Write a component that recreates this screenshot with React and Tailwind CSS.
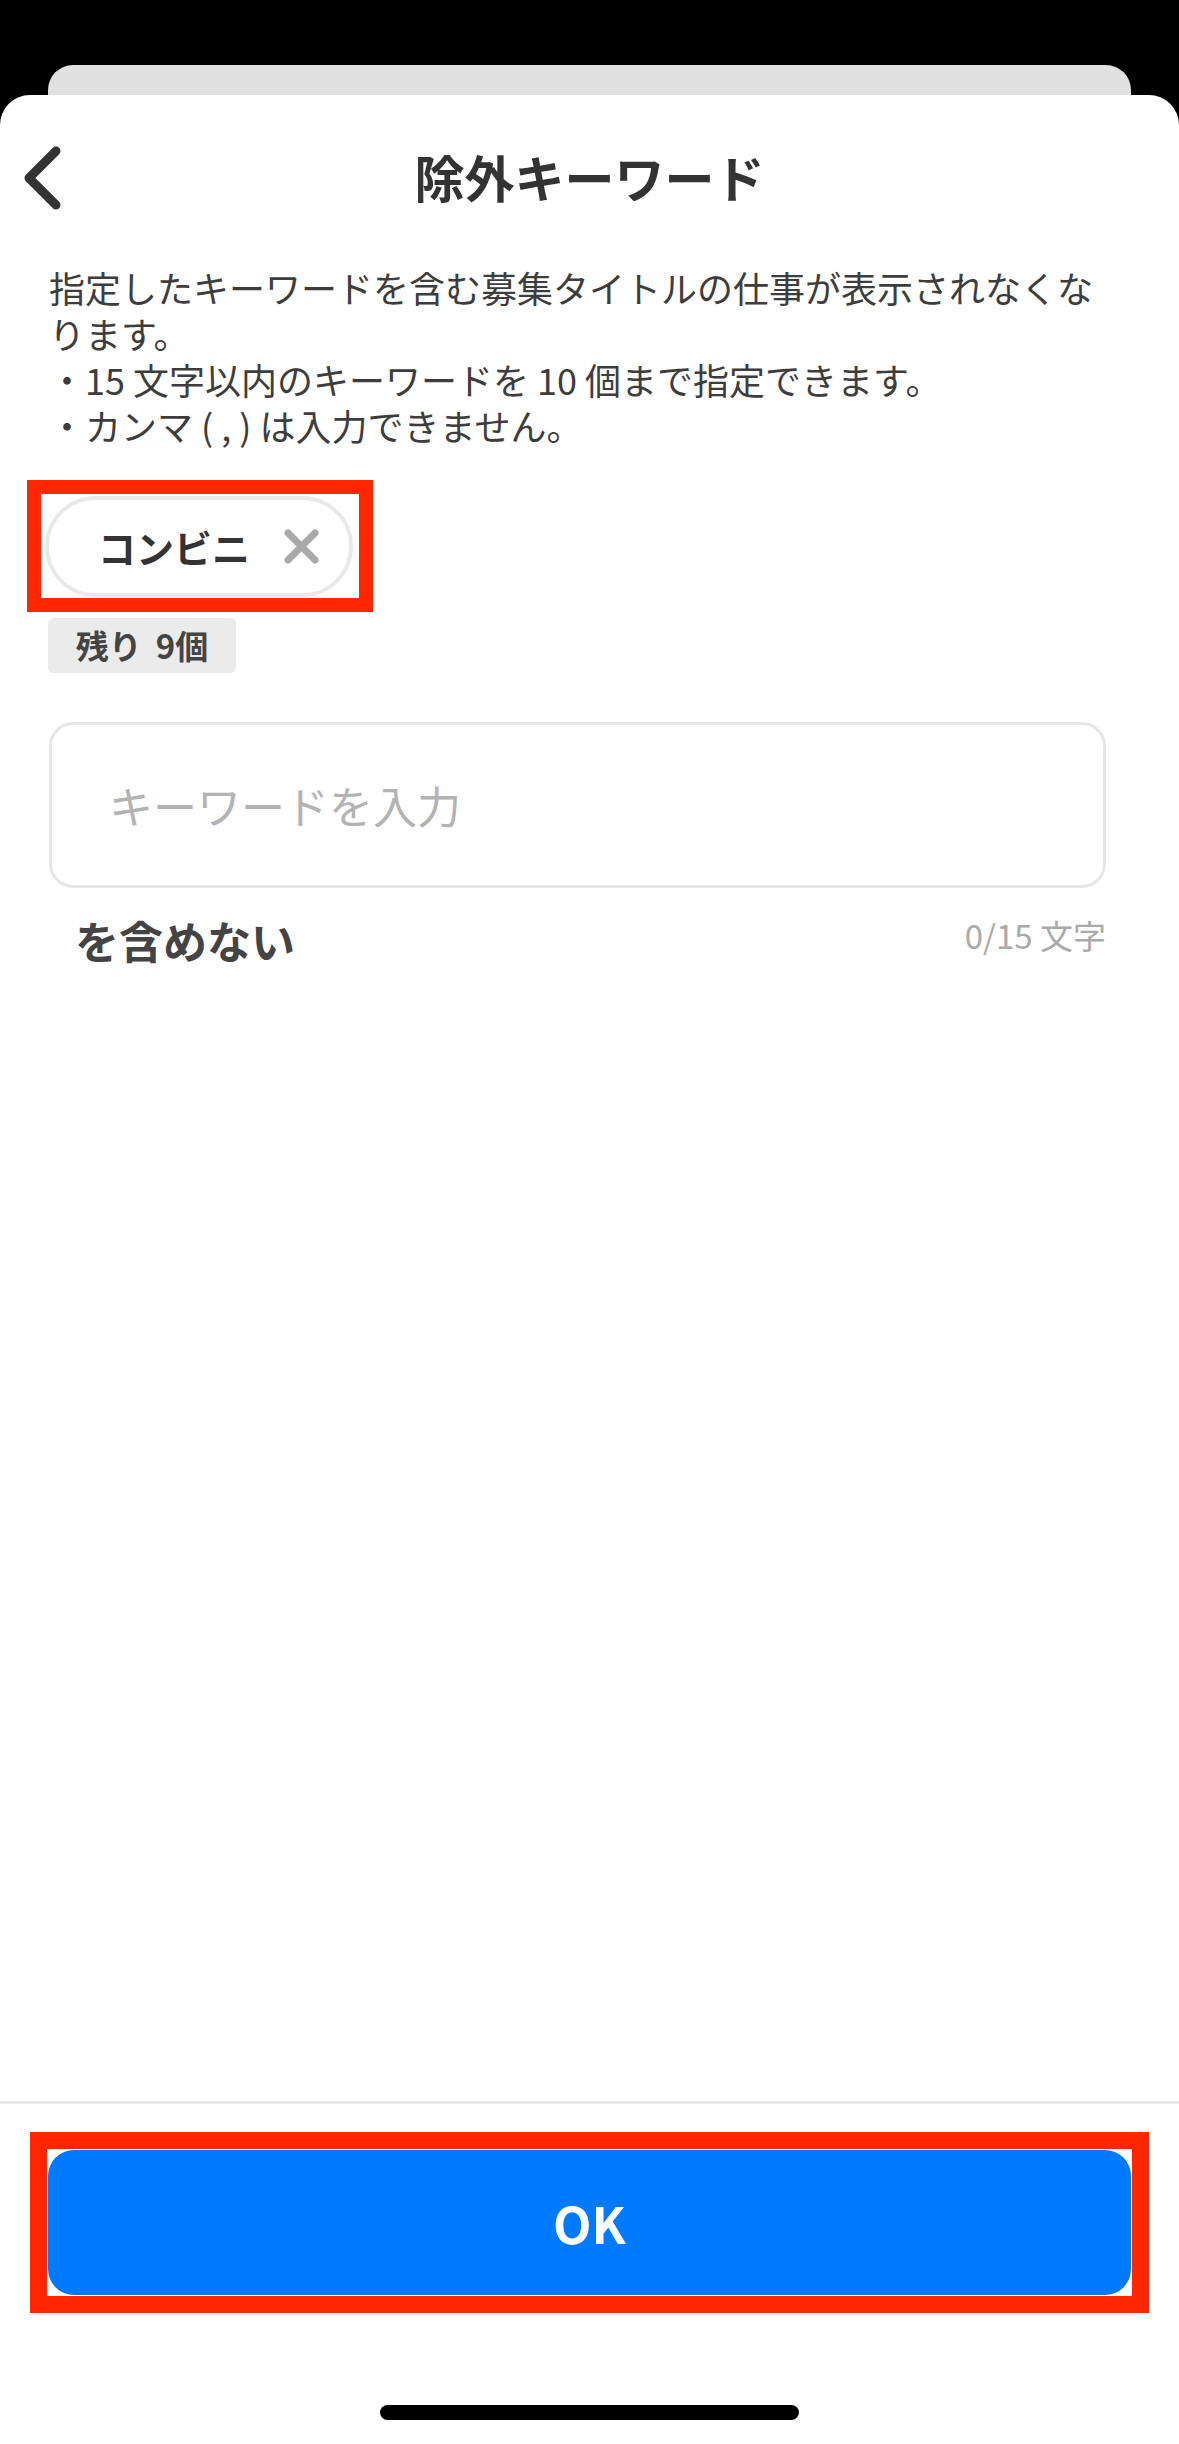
import React from 'react';

const font = "font-['Noto_Sans_CJK_JP','Noto_Sans',sans-serif]";

const BackIcon = () => (
  <svg width="40" height="64" viewBox="0 0 40 64" fill="none">
    <path d="M33 5 L6 32 L33 59" stroke="#333333" strokeWidth="9" strokeLinecap="round" strokeLinejoin="round" />
  </svg>
);

const CloseIcon = () => (
  <svg width="37" height="37" viewBox="0 0 37 37" fill="none">
    <path d="M5 5 L32 32 M32 5 L5 32" stroke="#a9a9a9" strokeWidth="7" strokeLinecap="round" />
  </svg>
);

const KeywordChip = ({ label }) => (
  <div className="flex h-[101px] items-center rounded-full border-4 border-[#e9e9e9] bg-white pl-[49px] pr-[29px]">
    <span className="text-[38px] font-bold leading-none text-[#333333]">{label}</span>
    <button className="ml-[33px] flex items-center">
      <CloseIcon />
    </button>
  </div>
);

export default function App() {
  const keywords = ['コンビニ'];
  const remaining = 10 - keywords.length;

  return (
    <div className={`${font} flex h-[2444px] w-[1179px] flex-col overflow-hidden bg-black`}>
      {/* card behind the sheet */}
      <div className="mx-[48px] mt-[65px] h-[30px] shrink-0 rounded-t-[25px] bg-[#e0e0e0]" />

      <div className="flex flex-1 flex-col rounded-t-[30px] bg-white">
        <header className="grid h-[169px] shrink-0 grid-cols-[1fr_auto_1fr] items-center pb-[3px]">
          <div className="pl-[23px]">
            <BackIcon />
          </div>
          <h1 className="-mt-[5px] text-[50px] font-bold leading-none text-[#333333]">除外キーワード</h1>
          <div />
        </header>

        <div className="flex flex-1 flex-col pl-[49px] pr-[73px]">
          <div className="text-[36px] leading-[46px] text-[#3d3d3d]">
            <p>指定したキーワードを含む募集タイトルの仕事が表示されなくなります。</p>
            <p>・15 文字以内のキーワードを 10 個まで指定できます。</p>
            <p>・カンマ ( , ) は入力できません。</p>
          </div>

          <div className="-ml-[22px] mt-[32px] flex">
            <div className="flex border-[14px] border-[#ff2600] pb-[1px] pl-[4px] pr-[6px] pt-[2px]">
              {keywords.map((k) => (
                <KeywordChip key={k} label={k} />
              ))}
            </div>
          </div>

          <div className="-ml-[1px] mt-[6px] flex h-[55px] w-[188px] items-center justify-center rounded-[6px] bg-[#ebebeb] text-[33px] font-bold text-[#444444]">
            <span>残り</span>
            <span className="ml-[14px]">{remaining}個</span>
          </div>

          <div className="mt-[49px] flex h-[166px] items-center rounded-[24px] border-[3px] border-[#e6e6e6] pl-[57px]">
            <input
              className="w-full bg-transparent text-[44px] text-[#333333] outline-none placeholder:text-[#b3b3b3]"
              placeholder="キーワードを入力"
            />
          </div>

          <div className="mt-[27px] flex items-start justify-between">
            <span className="pl-[26px] text-[44px] font-bold leading-[50px] text-[#444444]">を含めない</span>
            <span className="text-[33px] leading-[40px] text-[#aaaaaa]">0/15 文字</span>
          </div>
        </div>

        <div className="shrink-0 border-t-[3px] border-[#e8e8e8] pt-[28px]">
          <div className="ml-[30px] w-[1119px] border-[17px] border-[#ff2600] p-[1px]">
            <button className="flex h-[145px] w-full items-center justify-center rounded-[26px] bg-[#007aff] text-[50px] font-bold text-white">
              OK
            </button>
          </div>
          <div className="flex justify-center pb-[24px] pt-[92px]">
            <div className="h-[15px] w-[419px] rounded-full bg-black" />
          </div>
        </div>
      </div>
    </div>
  );
}
